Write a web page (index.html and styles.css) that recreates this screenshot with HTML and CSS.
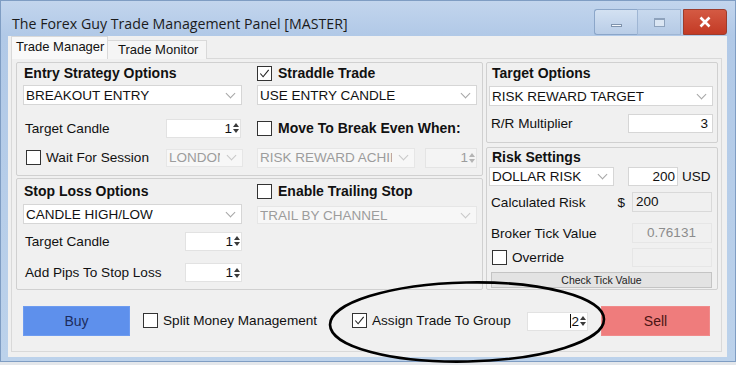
FILE: index.html
```html
<!DOCTYPE html>
<html lang="en">
<head>
    <meta charset="UTF-8">
    <title>The Forex Guy Trade Management Panel [MASTER]</title>
    <link rel="stylesheet" href="styles.css">
</head>
<body>
<div class="window">
    <div class="titlebar">
        <span class="title">The Forex Guy Trade Management Panel [MASTER]</span>
        <div class="caption">
            <div class="cbtn min"><span class="dash"></span></div>
            <div class="cbtn max"><span class="rect"></span></div>
            <div class="cbtn close">
                <svg width="14" height="12" viewBox="0 0 14 12"><path d="M2.5 1.5 L11.5 10.5 M11.5 1.5 L2.5 10.5" stroke="#fff" stroke-width="2.6"/></svg>
            </div>
        </div>
    </div>

    <div class="client">
        <div class="tabs">
            <div class="tab active">Trade Manager</div>
            <div class="tab">Trade Monitor</div>
        </div>

        <div class="tabpage">
            <div class="groups">
                <div class="col-left">
                    <!-- entry + straddle -->
                    <div class="group top-left">
                        <div class="sub sub-l">
                            <div class="gtitle">Entry Strategy Options</div>
                            <div class="combo mt2"><span>BREAKOUT ENTRY</span></div>
                            <div class="row r-target">
                                <span class="lbl">Target Candle</span>
                                <div class="spin w75"><span>1</span><i class="arr"></i></div>
                            </div>
                            <div class="row r-session">
                                <label class="chk"><i class="box"></i>Wait For Session</label>
                                <div class="combo dis w77"><span>LONDON</span></div>
                            </div>
                        </div>
                        <div class="sub sub-r">
                            <label class="chk bold gtitle"><i class="box on"><svg viewBox="0 0 14 14"><path d="M2.5 7 L5.5 10.5 L11.5 3" fill="none" stroke="#222" stroke-width="1.2"/></svg></i>Straddle Trade</label>
                            <div class="combo mt2"><span>USE ENTRY CANDLE</span></div>
                            <div class="row r-target">
                                <label class="chk bold"><i class="box"></i>Move To Break Even When:</label>
                            </div>
                            <div class="row r-session">
                                <div class="combo dis w158"><span>RISK REWARD ACHIEVED</span></div>
                                <div class="spin dis w52"><span>1</span><i class="arr"></i></div>
                            </div>
                        </div>
                    </div>

                    <!-- stop loss + trailing -->
                    <div class="group bottom-left">
                        <div class="sub sub-l">
                            <div class="gtitle">Stop Loss Options</div>
                            <div class="combo mt3"><span>CANDLE HIGH/LOW</span></div>
                            <div class="row r-sl1">
                                <span class="lbl">Target Candle</span>
                                <div class="spin w57"><span>1</span><i class="arr"></i></div>
                            </div>
                            <div class="row r-sl2">
                                <span class="lbl">Add Pips To Stop Loss</span>
                                <div class="spin w57"><span>1</span><i class="arr"></i></div>
                            </div>
                        </div>
                        <div class="sub sub-r">
                            <label class="chk bold gtitle"><i class="box"></i>Enable Trailing Stop</label>
                            <div class="combo dis trail"><span>TRAIL BY CHANNEL</span></div>
                        </div>
                    </div>
                </div>

                <div class="col-right">
                    <div class="group target">
                        <div class="gtitle">Target Options</div>
                        <div class="combo mt3"><span>RISK REWARD TARGET</span></div>
                        <div class="row r-rr">
                            <span class="lbl">R/R Multiplier</span>
                            <div class="input w85">3</div>
                        </div>
                    </div>
                    <div class="group risk">
                        <div class="gtitle short">Risk Settings</div>
                        <div class="row r-dollar">
                            <div class="combo w125"><span>DOLLAR RISK</span></div>
                            <div class="input w50">200</div>
                            <span class="usd">USD</span>
                        </div>
                        <div class="row r-calc">
                            <span class="lbl grow">Calculated Risk</span>
                            <span class="dollar">$</span>
                            <div class="input ro w80">200</div>
                        </div>
                        <div class="row r-tick">
                            <span class="lbl grow">Broker Tick Value</span>
                            <div class="input ro center w80">0.76131</div>
                        </div>
                        <div class="row r-override">
                            <label class="chk grow"><i class="box"></i>Override</label>
                            <div class="input ro empty w80"></div>
                        </div>
                        <div class="btn-check">Check Tick Value</div>
                    </div>
                </div>
            </div>

            <div class="actions">
                <div class="btn buy">Buy</div>
                <label class="chk split"><i class="box"></i>Split Money Management</label>
                <label class="chk assign"><i class="box on"><svg viewBox="0 0 14 14"><path d="M2.5 7 L5.5 10.5 L11.5 3" fill="none" stroke="#222" stroke-width="1.2"/></svg></i>Assign Trade To Group</label>
                <div class="spin w61"><b class="caret"></b><span>2</span><i class="arr"></i></div>
                <div class="btn sell">Sell</div>
            </div>
        </div>
    </div>
</div>

<svg class="marker" width="736" height="365" viewBox="0 0 736 365">
    <ellipse cx="467" cy="322" rx="137" ry="39.5" fill="none" stroke="#000" stroke-width="2.6" transform="rotate(-1.2 467 322)"/>
</svg>
</body>
</html>
```

FILE: styles.css
```css
* {
    margin: 0;
    padding: 0;
    box-sizing: border-box;
}
body {
    width: 736px;
    height: 365px;
    overflow: hidden;
    position: relative;
    background: #e4e7eb;
    font-family: 'Liberation Sans', Arial, sans-serif;
    font-size: 13.6px;
    color: #111;
}
.window {
    width: 736px;
    height: 362px;
    background: linear-gradient(#c2d5ed, #b1c9e7 34px, #bcd2eb);
    border: 1px solid #7f9dc3;
    padding: 0 8px 4px 7px;
    display: flex;
    flex-direction: column;
}
.titlebar {
    height: 35px;
    display: flex;
    justify-content: space-between;
    flex: none;
}
.title {
    font-family: 'Open Sans', sans-serif;
    font-size: 14.2px;
    color: #1b1b1b;
    padding: 13px 0 0 4px;
}
.caption {
    display: flex;
    margin-top: 8px;
    height: 26px;
}
.cbtn {
    display: flex;
    align-items: center;
    justify-content: center;
}
.min {
    width: 43px;
    border: 1px solid #8ba6c9;
    border-right: none;
    border-radius: 3px 0 0 3px;
    background: linear-gradient(#d3e1f2, #b9cde7);
}
.max {
    width: 44px;
    border: 1px solid #9fb6d4;
    background: linear-gradient(#c8d9ee, #b5cae5);
}
.close {
    width: 44px;
    margin-left: 2px;
    border: 1px solid #9c3c2c;
    border-radius: 0 3px 3px 0;
    background: linear-gradient(#d45a43, #c33a25);
}
.dash {
    width: 11px;
    height: 3px;
    margin-top: 6px;
    background: #f4f8fc;
    border: 1px solid #7f93ad;
}
.rect {
    width: 11px;
    height: 9px;
    border: 1px solid #8ea2bc;
    border-top-width: 2px;
    background: #dbe6f3;
}

.client {
    flex: 1;
    background: #f0f0f0;
    padding: 1px 3px 0 3px;
}
.tabs {
    display: flex;
    align-items: flex-end;
    height: 22px;
    font-size: 13px;
}
.tab {
    height: 19px;
    line-height: 18px;
    padding: 0 5px 0 10px;
    width: 99px;
    background: #f5f5f5;
    border: 1px solid #d9d9d9;
    border-left: none;
    border-bottom: none;
}
.tab.active {
    position: relative;
    z-index: 1;
    width: 97px;
    height: 23px;
    line-height: 20px;
    padding: 0 0 0 4px;
    background: #f9f9f9;
    border-left: 1px solid #d9d9d9;
}
.tabpage {
    margin-top: -1px;
    width: 711px;
    height: 294px;
    border: 1px solid #d9d9d9;
    padding: 3px 3px 0 4px;
}
.groups {
    display: flex;
    gap: 3px;
}
.col-left {
    width: 467px;
    display: flex;
    flex-direction: column;
    gap: 2px;
}
.col-right {
    width: 232px;
    display: flex;
    flex-direction: column;
    gap: 4px;
}
.group {
    border: 1px solid #d0d0d0;
    border-radius: 2px;
}
.top-left, .bottom-left {
    display: flex;
    gap: 15px;
    padding: 0 5px 0 6px;
}
.top-left { height: 114px; }
.bottom-left { height: 112px; padding-top: 2px; }
.sub {
    display: flex;
    flex-direction: column;
}
.sub-l { width: 219px; }
.sub-r { width: 220px; }

.gtitle {
    height: 20px;
    display: flex;
    align-items: center;
    font-weight: bold;
    font-size: 14px;
    padding-left: 1px;
}
.sub-r .gtitle { padding-left: 0; }

.row {
    display: flex;
    align-items: center;
    justify-content: space-between;
}
.lbl { padding-left: 2px; }
.grow { flex: 1; }

.r-target { height: 22px; margin-top: 12px; }
.r-session { height: 21px; margin-top: 8px; }
.r-sl1 { height: 20px; margin-top: 7px; }
.r-sl2 { height: 21px; margin-top: 11px; }

.combo {
    height: 20px;
    display: flex;
    align-items: center;
    background: #fff;
    border: 1px solid #d6d6d6;
    padding-left: 2px;
    font-size: 13.5px;
    white-space: nowrap;
}
.combo span {
    flex: 1;
    min-width: 0;
    overflow: hidden;
}
.combo::after {
    content: "";
    flex: none;
    width: 6px;
    height: 6px;
    margin: 0 7px 4px 8px;
    border-right: 1px solid #a6a6a6;
    border-bottom: 1px solid #a6a6a6;
    transform: rotate(45deg);
}
.combo.dis {
    background: #f7f7f7;
    border-color: #e6e6e6;
    color: #9c9c9c;
}
.combo.dis::after {
    border-color: #c8c8c8;
}
.mt2 { margin-top: 2px; }
.mt3 { margin-top: 3px; }
.w77 { width: 77px; height: 18px; margin-right: -1px; }
.w158 { width: 158px; }
.w125 { width: 125px; height: 19px; }
.trail { height: 18px; margin-top: 5px; }

.spin {
    height: 19px;
    display: flex;
    align-items: center;
    justify-content: flex-end;
    background: #fff;
    border: 1px solid #e2e2e2;
    padding-right: 1px;
    font-size: 13.5px;
}
.spin.dis {
    background: #f4f4f4;
    border-color: #e4e4e4;
    color: #9c9c9c;
}
.arr {
    display: flex;
    flex-direction: column;
    gap: 2px;
    margin-left: 1px;
}
.arr::before, .arr::after {
    content: "";
    border-left: 3px solid transparent;
    border-right: 3px solid transparent;
}
.arr::before { border-bottom: 4px solid #3a3a3a; }
.arr::after { border-top: 4px solid #3a3a3a; }
.spin.dis .arr::before { border-bottom-color: #b4b4b4; }
.spin.dis .arr::after { border-top-color: #b4b4b4; }
.w75 { width: 75px; margin-right: 1px; }
.w52 { width: 52px; height: 20px; }
.w57 { width: 57px; }
.w61 { width: 61px; }
.caret {
    width: 1px;
    height: 14px;
    background: #111;
}

.chk {
    display: flex;
    align-items: center;
}
.chk.bold {
    font-weight: bold;
    font-size: 14px;
}
.box {
    flex: none;
    width: 15px;
    height: 15px;
    border: 1px solid #333;
    background: #fff;
    margin-right: 5px;
}
.sub-r .box { margin-right: 6px; }
.box svg {
    display: block;
    width: 13px;
    height: 13px;
}
.r-session .chk { padding-left: 3px; }

.target {
    height: 81px;
    padding: 0 4px 0 2px;
}
.target .gtitle { padding-left: 3px; }
.r-rr { height: 20px; margin-top: 7px; }
.input {
    height: 19px;
    line-height: 17px;
    background: #fff;
    border: 1px solid #d6d6d6;
    text-align: right;
    padding-right: 4px;
    font-size: 13.5px;
}
.w85 { width: 85px; }
.w50 { width: 50px; margin-left: 14px; padding-right: 2px; }
.w80 { width: 80px; height: 20px; line-height: 18px; margin-right: 1px; }
.input.ro {
    background: #f0f0f0;
    border-color: #d9d9d9;
    text-align: left;
    padding-left: 3px;
}
.input.center {
    text-align: center;
    color: #8c8c8c;
    border-color: #e6e6e6;
}
.input.empty {
    height: 19px;
    border-color: #e6e6e6;
}

.risk {
    height: 143px;
    padding: 0 4px 0 2px;
}
.gtitle.short { height: 18px; padding-left: 3px; }
.r-dollar { height: 19px; margin-top: 1px; justify-content: flex-start; }
.usd { margin-left: 4px; font-size: 13.5px; }
.r-calc { height: 20px; margin-top: 6px; }
.r-tick { height: 20px; margin-top: 11px; }
.r-override { height: 19px; margin-top: 5px; }
.r-calc .lbl, .r-tick .lbl { padding-left: 2px; }
.r-override .chk { padding-left: 3px; }
.dollar { margin-right: 7px; font-size: 13.5px; }
.btn-check {
    height: 16px;
    margin: 5px 1px 0 2px;
    background: #e3e3e3;
    border: 1px solid #c4c4c4;
    font-size: 10.5px;
    line-height: 14px;
    text-align: center;
    color: #222;
}

.actions {
    height: 61px;
    display: flex;
    align-items: center;
}
.btn {
    height: 30px;
    line-height: 30px;
    text-align: center;
    font-size: 14px;
}
.buy {
    width: 107px;
    margin-left: 7px;
    background: #5e90ec;
    color: #1c2c5c;
    box-shadow: inset 0 0 0 1px #6d9bf0;
}
.sell {
    width: 109px;
    margin-left: 13px;
    background: #ef7c7c;
    color: #4b1414;
    box-shadow: inset 0 0 0 1px #f08a8a;
}
.split {
    width: 209px;
    margin-left: 13px;
}
.assign {
    width: 175px;
}
.actions .spin { height: 19px; margin-top: 1px; }

.marker {
    position: absolute;
    left: 0;
    top: 0;
    pointer-events: none;
}
```
